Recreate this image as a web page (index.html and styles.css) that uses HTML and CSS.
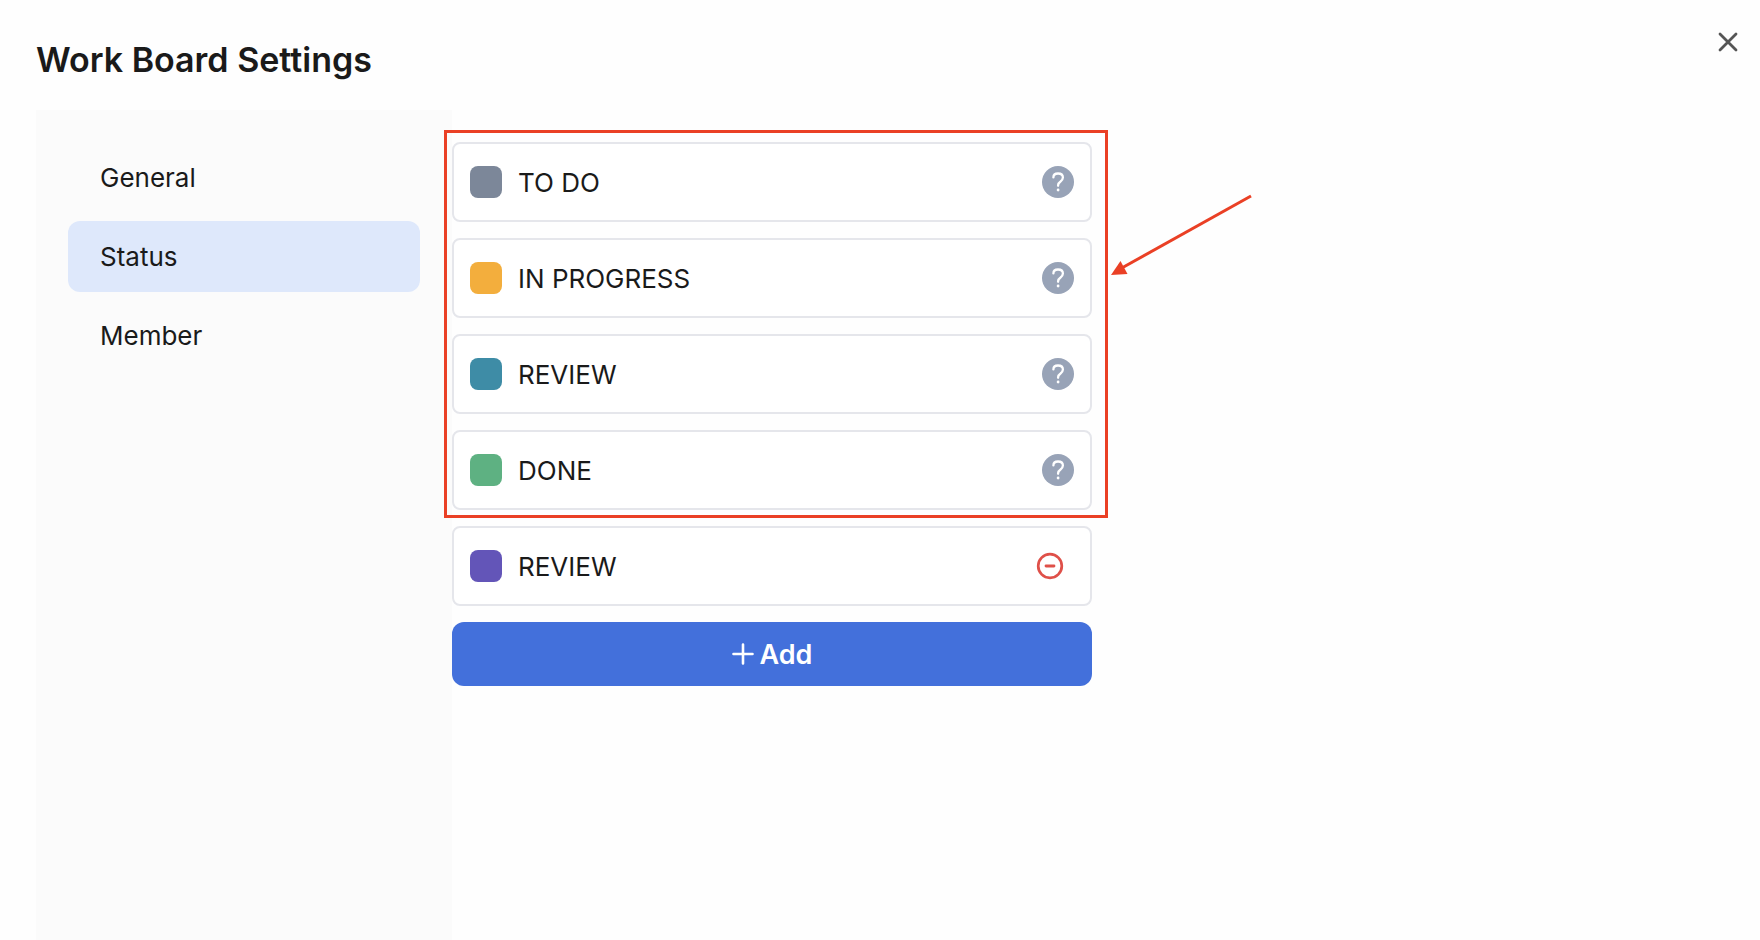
FILE: index.html
```html
<!DOCTYPE html>
<html lang="en">
<head>
<meta charset="utf-8">
<title>Work Board Settings</title>
<link rel="stylesheet" href="styles.css">
</head>
<body>
<div class="dialog">
  <header class="dialog-header">
    <h1 class="dialog-title">Work Board Settings</h1>
    <button class="close" type="button" aria-label="Close">
      <svg width="20" height="20" viewBox="0 0 20 20" aria-hidden="true"><path d="M2 2L18 18M18 2L2 18" stroke="#555" stroke-width="2.8" stroke-linecap="round"/></svg>
    </button>
  </header>
  <div class="dialog-body">
    <nav class="sidebar">
      <a class="nav-item" href="#general">General</a>
      <a class="nav-item active" href="#status" aria-current="page">Status</a>
      <a class="nav-item" href="#member">Member</a>
    </nav>
    <main class="content">
      <svg class="symbols" width="0" height="0" aria-hidden="true">
        <symbol id="help" viewBox="0 0 32 32">
          <circle cx="16" cy="16" r="16" fill="#98a3b7"/>
          <path d="M11.4 11.4C11.4 8.8 13.3 7.5 16 7.5C18.9 7.5 20.9 9 20.9 11.5C20.9 13.6 19.8 14.6 18.3 15.7C16.7 16.8 16.1 17.6 16.1 19.2V19.8" fill="none" stroke="#fff" stroke-width="2.3" stroke-linecap="round"/>
          <circle cx="16.1" cy="24" r="1.4" fill="#fff"/>
        </symbol>
      </svg>
      <div class="fixed-group">
        <ul class="status-list">
          <li class="card"><span class="swatch gray"></span><span class="name">TO DO</span><button class="help" type="button" aria-label="Help"><svg width="32" height="32"><use href="#help"/></svg></button></li>
          <li class="card"><span class="swatch amber"></span><span class="name">IN PROGRESS</span><button class="help" type="button" aria-label="Help"><svg width="32" height="32"><use href="#help"/></svg></button></li>
          <li class="card"><span class="swatch teal"></span><span class="name">REVIEW</span><button class="help" type="button" aria-label="Help"><svg width="32" height="32"><use href="#help"/></svg></button></li>
          <li class="card"><span class="swatch green"></span><span class="name">DONE</span><button class="help" type="button" aria-label="Help"><svg width="32" height="32"><use href="#help"/></svg></button></li>
        </ul>
        <div class="frame"></div>
        <svg class="arrow" width="150" height="90" viewBox="0 0 150 90" aria-hidden="true">
          <path d="M143 6L12 79" stroke="#ea4025" stroke-width="3" fill="none"/>
          <path d="M3 85L12.5 71L19.5 84Z" fill="#ea4025"/>
        </svg>
      </div>
      <ul class="status-list">
        <li class="card"><span class="swatch purple"></span><span class="name">REVIEW</span><button class="remove" type="button" aria-label="Remove"><svg width="28" height="28" viewBox="0 0 28 28"><circle cx="14" cy="14" r="11.8" fill="none" stroke="#df5049" stroke-width="2.7"/><path d="M10 14H18" stroke="#df5049" stroke-width="2.8" stroke-linecap="round"/></svg></button></li>
      </ul>
      <button class="add" type="button">
        <svg width="22" height="22" viewBox="0 0 22 22" aria-hidden="true"><path d="M11 1.5V20.5M1.5 11H20.5" stroke="#fff" stroke-width="2.6" stroke-linecap="round"/></svg>
        Add
      </button>
    </main>
  </div>
</div>
</body>
</html>
```

FILE: styles.css
```css
* { box-sizing: border-box; }

body {
  margin: 0;
  background: #fefefe;
  color: #1a1a1a;
  font-family: Inter, "Liberation Sans", sans-serif;
  font-size: 26px;
  line-height: 39px;
}

button {
  padding: 0;
  border: 0;
  background: none;
  font: inherit;
  cursor: pointer;
}

svg { display: block; }
.symbols { position: absolute; }

.dialog {
  display: flex;
  flex-direction: column;
  min-height: 100vh;
}

.dialog-header {
  display: flex;
  justify-content: space-between;
  align-items: flex-start;
  padding: 32px 22px 22px 36px;
}

.dialog-title {
  margin: 0;
  font-size: 34px;
  font-weight: 600;
  line-height: 56px;
}

.close {
  display: grid;
  place-items: center;
  width: 20px;
  height: 20px;
}

.dialog-body {
  display: flex;
  flex: 1;
  padding-left: 36px;
}

.sidebar {
  display: flex;
  flex-direction: column;
  gap: 8px;
  width: 416px;
  padding: 32px;
  background: #fbfbfb;
}

.nav-item {
  padding: 16px 32px;
  border-radius: 12px;
  color: inherit;
  text-decoration: none;
}

.nav-item.active { background: #dee8fb; }

.content {
  display: flex;
  flex-direction: column;
  gap: 16px;
  flex: 0 1 640px;
  padding: 32px 0;
}

.fixed-group { position: relative; }

.status-list {
  display: flex;
  flex-direction: column;
  gap: 16px;
  margin: 0;
  padding: 0;
  list-style: none;
}

.card {
  display: flex;
  align-items: center;
  gap: 16px;
  min-height: 80px;
  padding: 0 16px;
  border: 2px solid #e5e6eb;
  border-radius: 8px;
  background: #fff;
}

.swatch {
  width: 32px;
  height: 32px;
  border-radius: 8px;
}

.gray { background: #7c8799; }
.amber { background: #f3ae3d; }
.teal { background: #3e8ca6; }
.green { background: #5eb182; }
.purple { background: #6355b8; }

.name { flex: 1; }

.remove {
  display: grid;
  place-items: center;
  width: 48px;
  height: 48px;
}

.frame {
  position: absolute;
  inset: -12px -16px -8px -8px;
  border: 3px solid #ea4025;
  pointer-events: none;
}

.arrow {
  position: absolute;
  top: 48px;
  left: calc(100% + 16px);
}

.add {
  display: flex;
  justify-content: center;
  align-items: center;
  gap: 6px;
  height: 64px;
  border-radius: 12px;
  background: #4370db;
  color: #fff;
  font-size: 27px;
  font-weight: 600;
}
```
